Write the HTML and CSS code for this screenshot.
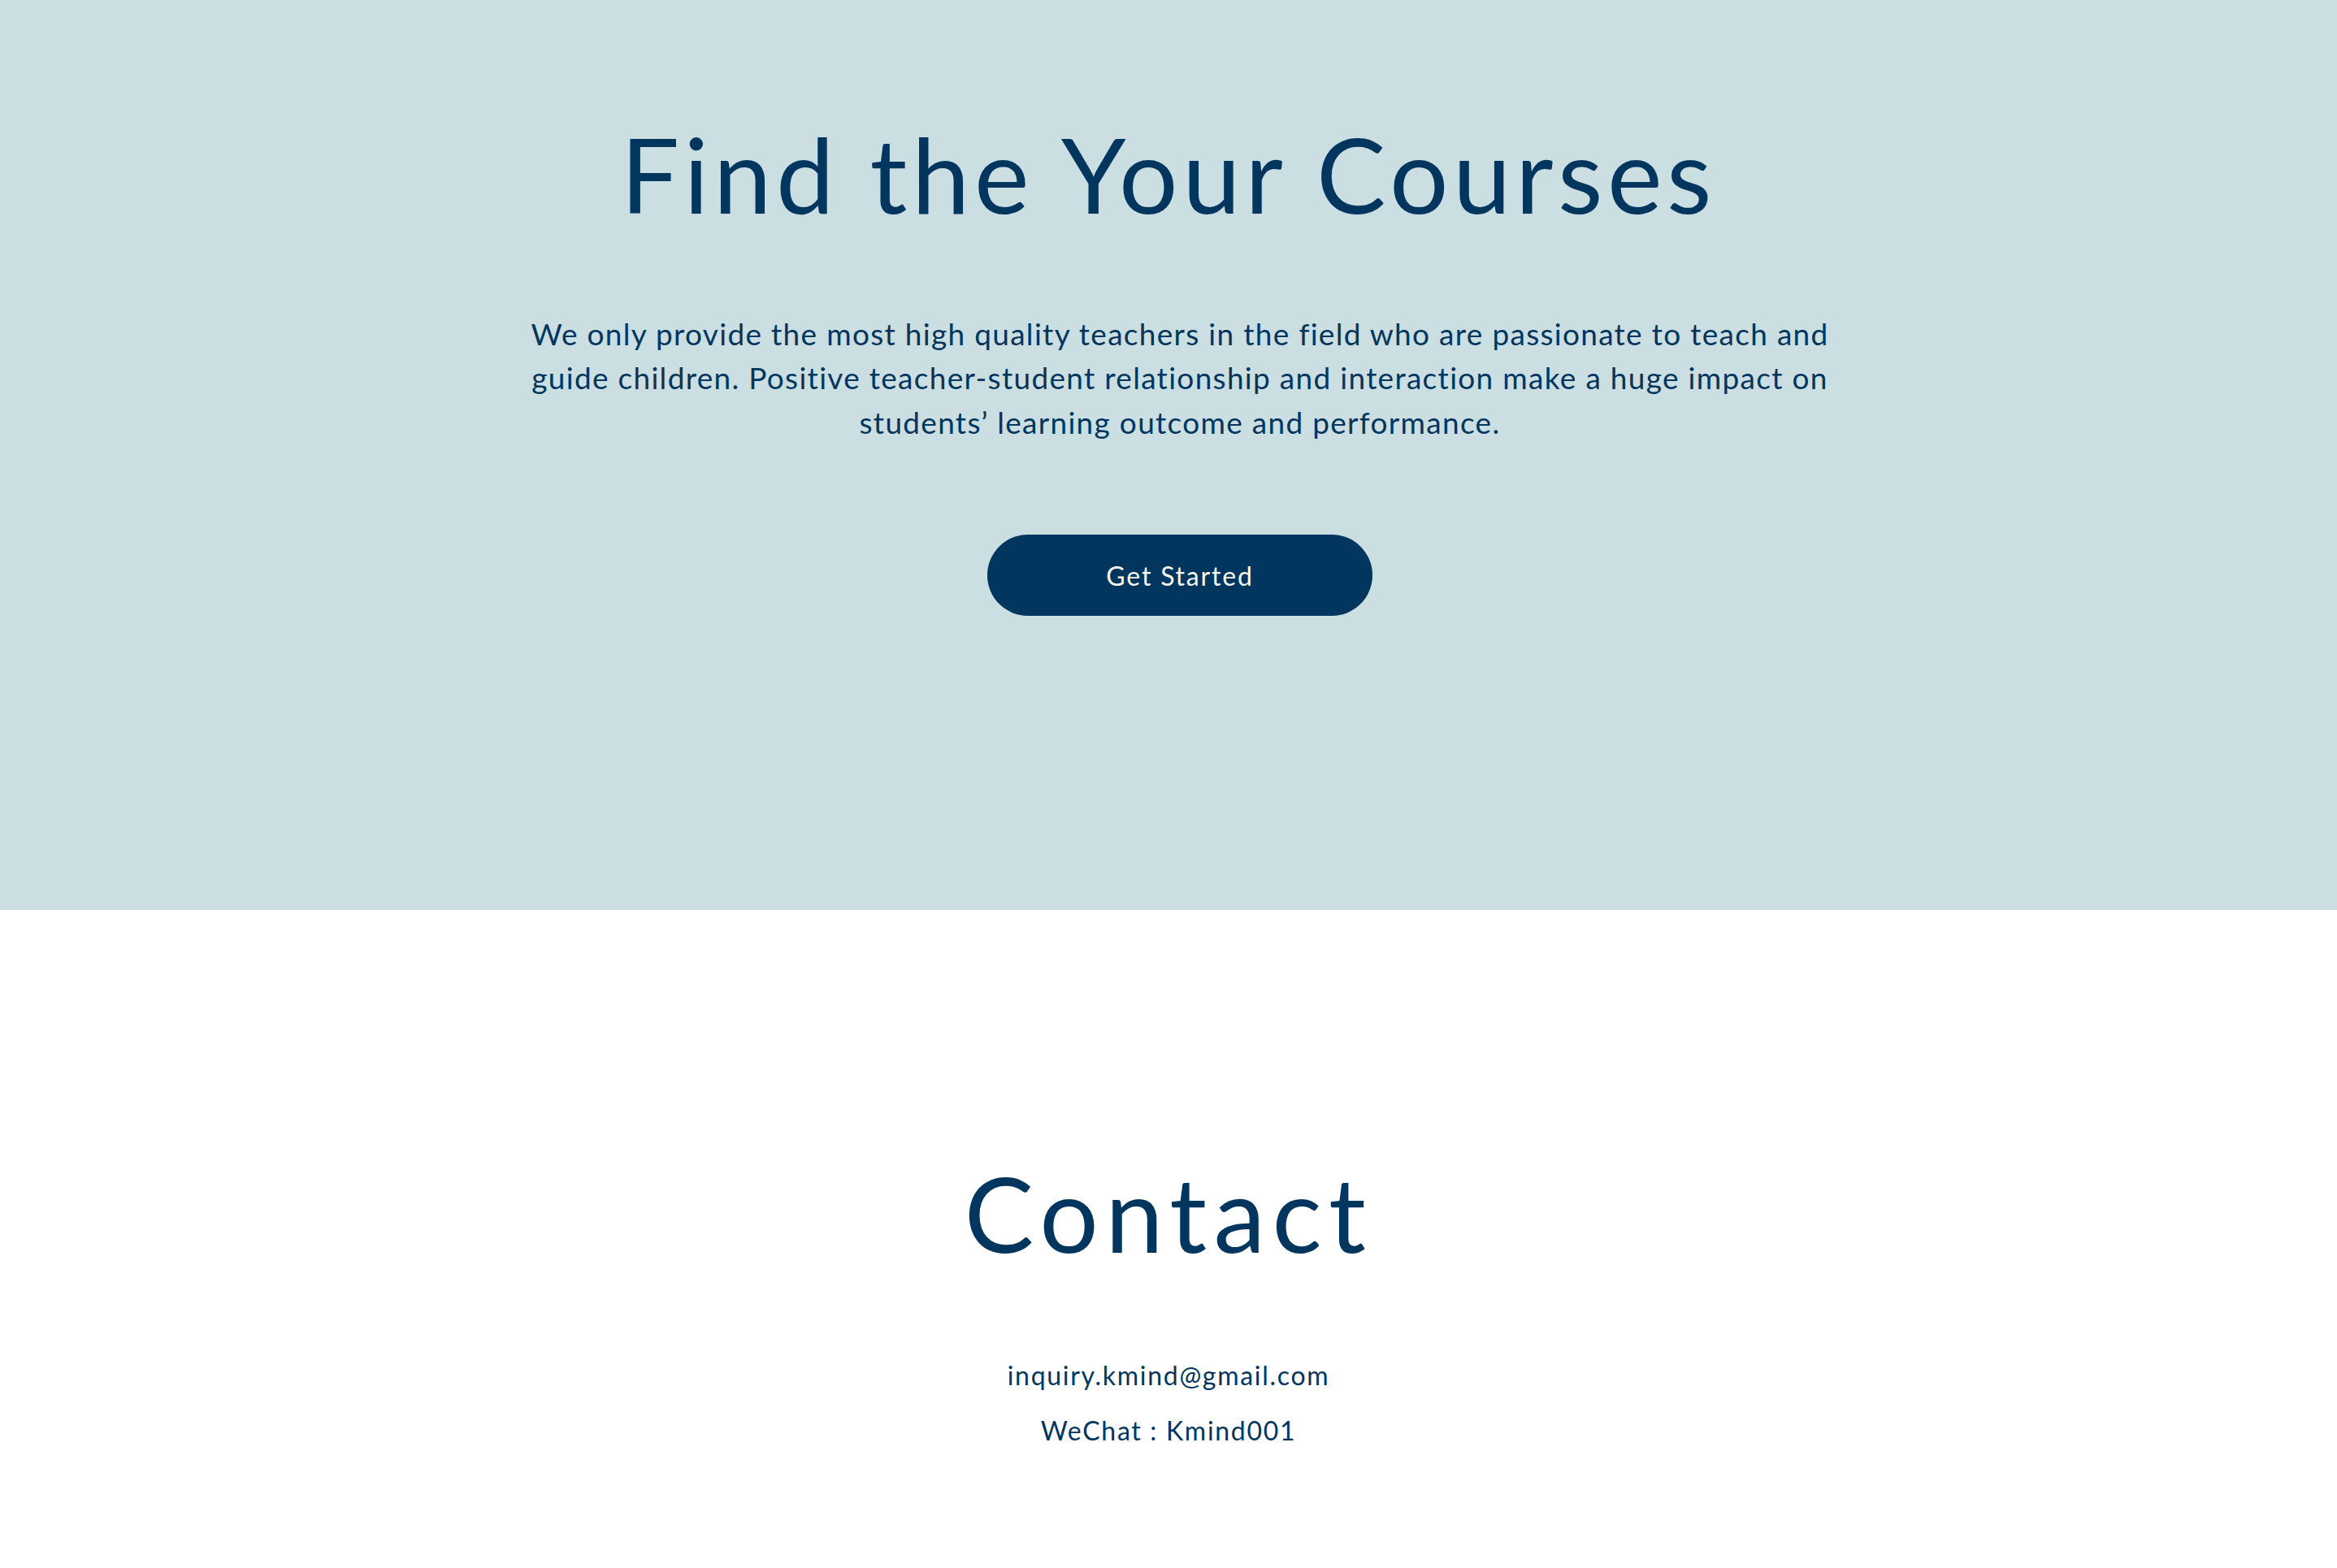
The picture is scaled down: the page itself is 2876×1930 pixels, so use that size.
FILE: index.html
```html
<!DOCTYPE html>
<html lang="en">
<head>
<meta charset="utf-8">
<title>Find the Your Courses</title>
<link rel="stylesheet" href="styles.css">
</head>
<body>
<section class="hero">
  <h1 class="hero-title">Find the Your Courses</h1>
  <div class="hero-body">
    <p class="hero-text">We only provide the most high quality teachers in the field who are passionate to teach and<br>guide children. Positive teacher-student relationship and interaction make a huge impact on<br>students’ learning outcome and performance.</p>
    <a class="btn" href="#">Get Started</a>
  </div>
</section>
<section class="contact">
  <h2 class="contact-title">Contact</h2>
  <p class="contact-line">inquiry.kmind@gmail.com</p>
  <p class="contact-line contact-line--second">WeChat : Kmind001</p>
</section>
</body>
</html>
```
FILE: styles.css
```css
html, body {
  margin: 0;
  padding: 0;
  background: #ffffff;
}

body {
  font-family: "Lato", "Open Sans", sans-serif;
  color: #03365e;
}

.hero {
  background: #cbdee2;
  height: 1120px;
  box-sizing: border-box;
  padding-top: 137px;
  display: flex;
  flex-direction: column;
  align-items: center;
}

.hero-title {
  margin: 0;
  font-size: 128px;
  line-height: 1.2;
  font-weight: 400;
  letter-spacing: 5.6px;
  text-align: center;
  white-space: nowrap;
}

.hero-body {
  display: flex;
  flex-direction: column;
  align-items: center;
  padding-left: 28px;
}

.hero-text {
  margin: 93px 0 0;
  font-size: 37px;
  line-height: 54.5px;
  letter-spacing: 1.3px;
  text-align: center;
  white-space: nowrap;
}

.btn {
  margin-top: 111px;
  width: 474px;
  height: 100px;
  border-radius: 50px;
  background: #03365e;
  color: #f7f5f0;
  display: flex;
  align-items: center;
  justify-content: center;
  font-size: 32px;
  text-decoration: none;
  letter-spacing: 1.8px;
}

.contact {
  padding-top: 296px;
  display: flex;
  flex-direction: column;
  align-items: center;
}

.contact-title {
  margin: 0;
  font-size: 128px;
  line-height: 1.2;
  font-weight: 400;
  letter-spacing: 8.4px;
}

.contact-line {
  margin: 99px 0 0;
  font-size: 32px;
  line-height: 48px;
  letter-spacing: 1.7px;
}

.contact-line--second {
  margin-top: 20px;
}
```
